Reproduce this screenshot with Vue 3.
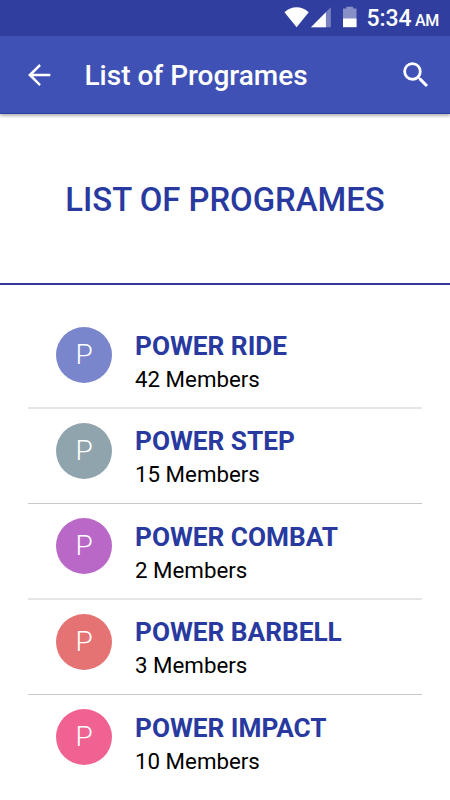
<template>
    <div class="screen">
        <div class="status-bar">
            <svg class="status-icons" width="74" height="24" viewBox="0 0 74 24">
                <path d="M0.5 6.2C7.5 -0.3 17.5 -0.3 24.7 6.2L12.6 21.2Z" fill="#fff" />
                <path d="M46.8 1.3V21.2H27Z" fill="#7982c0" />
                <path d="M41.9 6.2V21.2H27Z" fill="#fff" />
                <path d="M59 2.6h3.4V0.8h6.6V2.6h3.5v18.5H59Z" fill="#8790c7" />
                <path d="M59 12.5h13.5v8.7H59Z" fill="#fff" />
            </svg>
            <span class="clock">5:34</span>
            <span class="period">AM</span>
        </div>
        <header class="toolbar">
            <svg class="back" width="34" height="34" viewBox="0 0 24 24">
                <path d="M20 11.15H7.83l5.5-5.5L12.2 4.3l-7.9 7.7 7.9 7.7 1.13-1.25-5.5-5.5H20z" fill="#fff" />
            </svg>
            <span class="title">List of Programes</span>
            <svg class="search" width="34" height="34" viewBox="0 0 24 24">
                <path
                    d="M15.5 14h-.79l-.28-.27A6.471 6.471 0 0 0 16 9.5 6.5 6.5 0 1 0 9.5 16c1.61 0 3.09-.59 4.23-1.57l.27.28v.79l5 4.99L20.49 19l-4.99-5zm-6 0C7.01 14 5 11.99 5 9.5S7.01 5 9.5 5 14 7.01 14 9.5 11.99 14 9.5 14z"
                    fill="#fff"
                />
            </svg>
        </header>
        <h1 class="heading"><span>LIST OF PROGRAMES</span></h1>
        <ul class="list">
            <li v-for="item in programs" :key="item.name" class="row">
                <div class="avatar" :style="{ background: item.color }">P</div>
                <div class="info">
                    <div class="name">{{ item.name }}</div>
                    <div class="members">{{ item.members }} Members</div>
                </div>
            </li>
        </ul>
    </div>
</template>

<script setup>
const programs = [
    { name: 'POWER RIDE', members: 42, color: '#7986cb' },
    { name: 'POWER STEP', members: 15, color: '#90a4ae' },
    { name: 'POWER COMBAT', members: 2, color: '#ba68c8' },
    { name: 'POWER BARBELL', members: 3, color: '#e57373' },
    { name: 'POWER IMPACT', members: 10, color: '#f06292' },
];
</script>

<style>
body {
    margin: 0;
    background: #fff;
}
</style>

<style scoped>
.screen {
    width: 450px;
    height: 800px;
    overflow: hidden;
    background: #fff;
    font-family: Roboto, 'Liberation Sans', sans-serif;
}

.status-bar {
    display: flex;
    align-items: baseline;
    box-sizing: border-box;
    height: 36px;
    padding-left: 284px;
    background: #303f9f;
    color: #fff;
    white-space: nowrap;
}

.status-icons {
    flex: none;
    align-self: flex-start;
    margin-top: 6px;
}

.clock {
    margin-left: 8.5px;
    font-size: 23px;
    font-weight: 500;
    line-height: 38px;
    letter-spacing: -0.1px;
}

.period {
    margin-left: 3.5px;
    font-size: 16px;
    font-weight: 500;
    letter-spacing: -0.2px;
}

.toolbar {
    display: flex;
    align-items: center;
    box-sizing: border-box;
    height: 78px;
    padding: 0 17px 0 21.5px;
    background: #3f51b5;
    border-bottom: 1px solid #303f9f;
    box-shadow: 0 2px 3px rgba(0, 0, 0, 0.3);
    color: #fff;
}

.title {
    flex: 1;
    margin-left: 29px;
    font-size: 28px;
    font-weight: 500;
    line-height: 34px;
    margin-top: 2px;
}

.heading {
    display: flex;
    justify-content: center;
    align-items: center;
    box-sizing: border-box;
    height: 171px;
    margin: 0;
    padding-top: 2px;
    border-bottom: 2px solid #35359a;
    color: #2839a0;
    font-size: 32.85px;
    font-weight: 500;
}

.list {
    margin: 0;
    padding: 28px 28px 0;
    list-style: none;
}

.row {
    display: flex;
    box-sizing: border-box;
    height: 96px;
    padding: 14px 28px 0;
    border-bottom: 2px solid #e5e5e5;
}

.row:nth-child(even) {
    height: 95px;
    padding-top: 13.6px;
    border-bottom: 1px solid #c8c8c8;
}

.row:nth-child(even) .info {
    margin-top: -0.6px;
}

.row:last-child {
    border-bottom: none;
}

.avatar {
    flex: none;
    width: 56px;
    height: 56px;
    border-radius: 50%;
    color: #fff;
    font-size: 28px;
    font-weight: 300;
    line-height: 56px;
    text-align: center;
}

.info {
    margin-left: 23px;
    white-space: nowrap;
}

.name {
    margin-top: 2px;
    color: #2839a0;
    font-size: 26.2px;
    font-weight: 700;
    line-height: 34px;
}

.members {
    color: #000;
    font-size: 22.3px;
    line-height: 32px;
}
</style>
